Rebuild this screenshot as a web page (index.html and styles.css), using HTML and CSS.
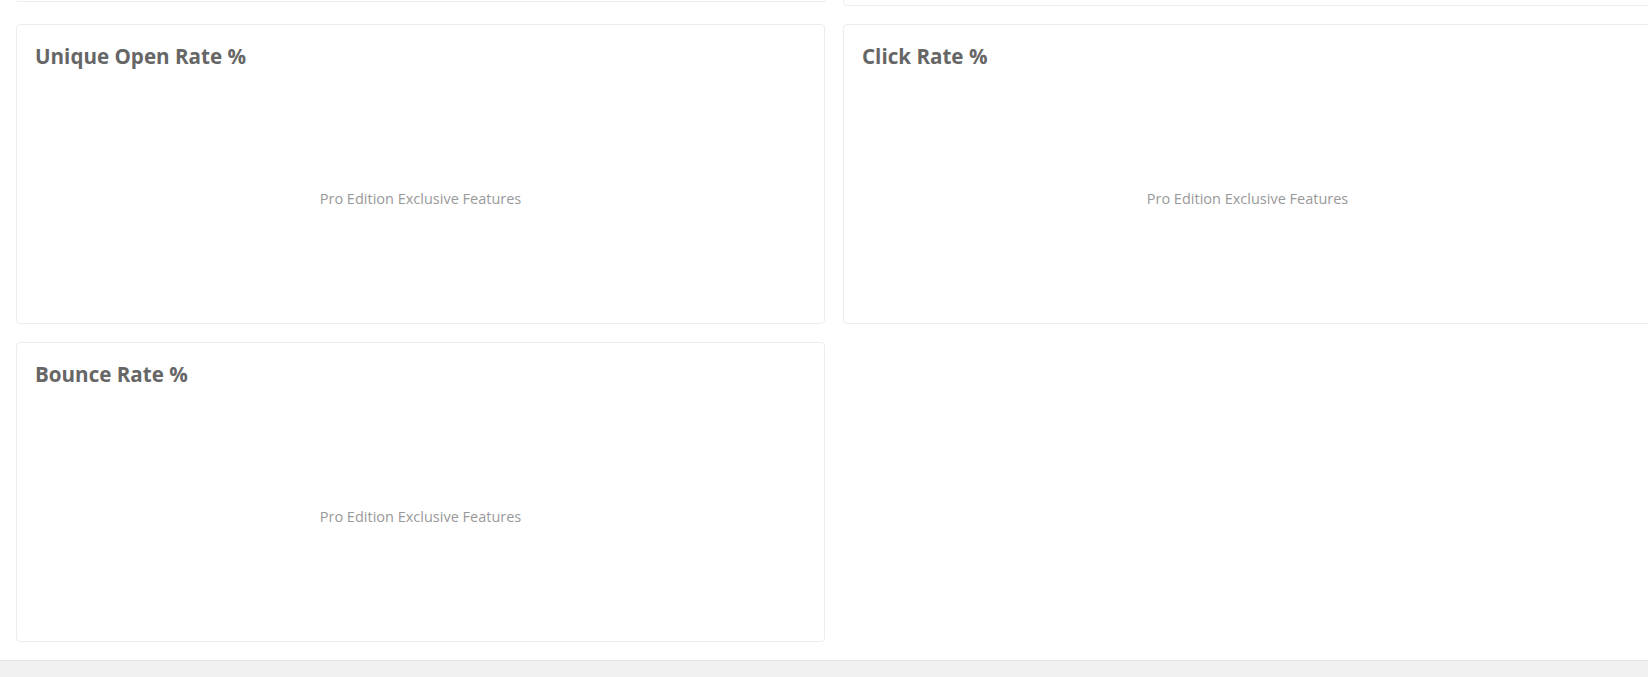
FILE: index.html
```html
<!DOCTYPE html>
<html lang="en">
<head>
<meta charset="utf-8">
<title>Email Statistics</title>
<link rel="stylesheet" href="styles.css">
</head>
<body>
<div class="page">
  <main class="content">
    <div class="grid">
      <section class="card card--clip card--clip-a"></section>
      <section class="card card--clip card--clip-b"></section>

      <section class="card">
        <h2 class="card-title">Unique Open Rate %</h2>
        <div class="chart"><span class="pro-note">Pro Edition Exclusive Features</span></div>
      </section>
      <section class="card">
        <h2 class="card-title">Click Rate %</h2>
        <div class="chart"><span class="pro-note">Pro Edition Exclusive Features</span></div>
      </section>

      <section class="card">
        <h2 class="card-title">Bounce Rate %</h2>
        <div class="chart"><span class="pro-note">Pro Edition Exclusive Features</span></div>
      </section>
    </div>
  </main>
  <footer class="footer"></footer>
</div>
</body>
</html>
```

FILE: styles.css
```css
html, body {
  margin: 0;
  padding: 0;
  background: #ffffff;
  overflow: hidden;
  font-family: "Open Sans", "Noto Sans", sans-serif;
}

.page {
  width: 100%;
  height: 100vh;
  display: flex;
  flex-direction: column;
  overflow: hidden;
}

.content {
  padding: 0 0 18px 16px;
}

.grid {
  display: grid;
  grid-template-columns: 809px 809px;
  column-gap: 18px;
  row-gap: 18px;
  align-items: start;
}

.card {
  box-sizing: border-box;
  height: 300px;
  background: #fff;
  border: 1px solid #ececec;
  border-radius: 4px;
  padding: 17px 18px 0;
  display: flex;
  flex-direction: column;
}

.card--clip {
  border-top: none;
  border-top-left-radius: 0;
  border-top-right-radius: 0;
  padding: 0;
}

.card--clip-a { height: 2px; }
.card--clip-b { height: 6px; }

.card-title {
  margin: 0;
  font-size: 20.6px;
  line-height: 28px;
  font-weight: 700;
  color: #666666;
}

.chart {
  flex: 1;
  display: flex;
  align-items: center;
  justify-content: center;
  padding-top: 3px;
}

.pro-note {
  font-size: 14.5px;
  line-height: 19px;
  color: #999999;
}

.footer {
  flex: 1;
  background: #f1f1f1;
  border-top: 1px solid #e6e6e6;
}
```
